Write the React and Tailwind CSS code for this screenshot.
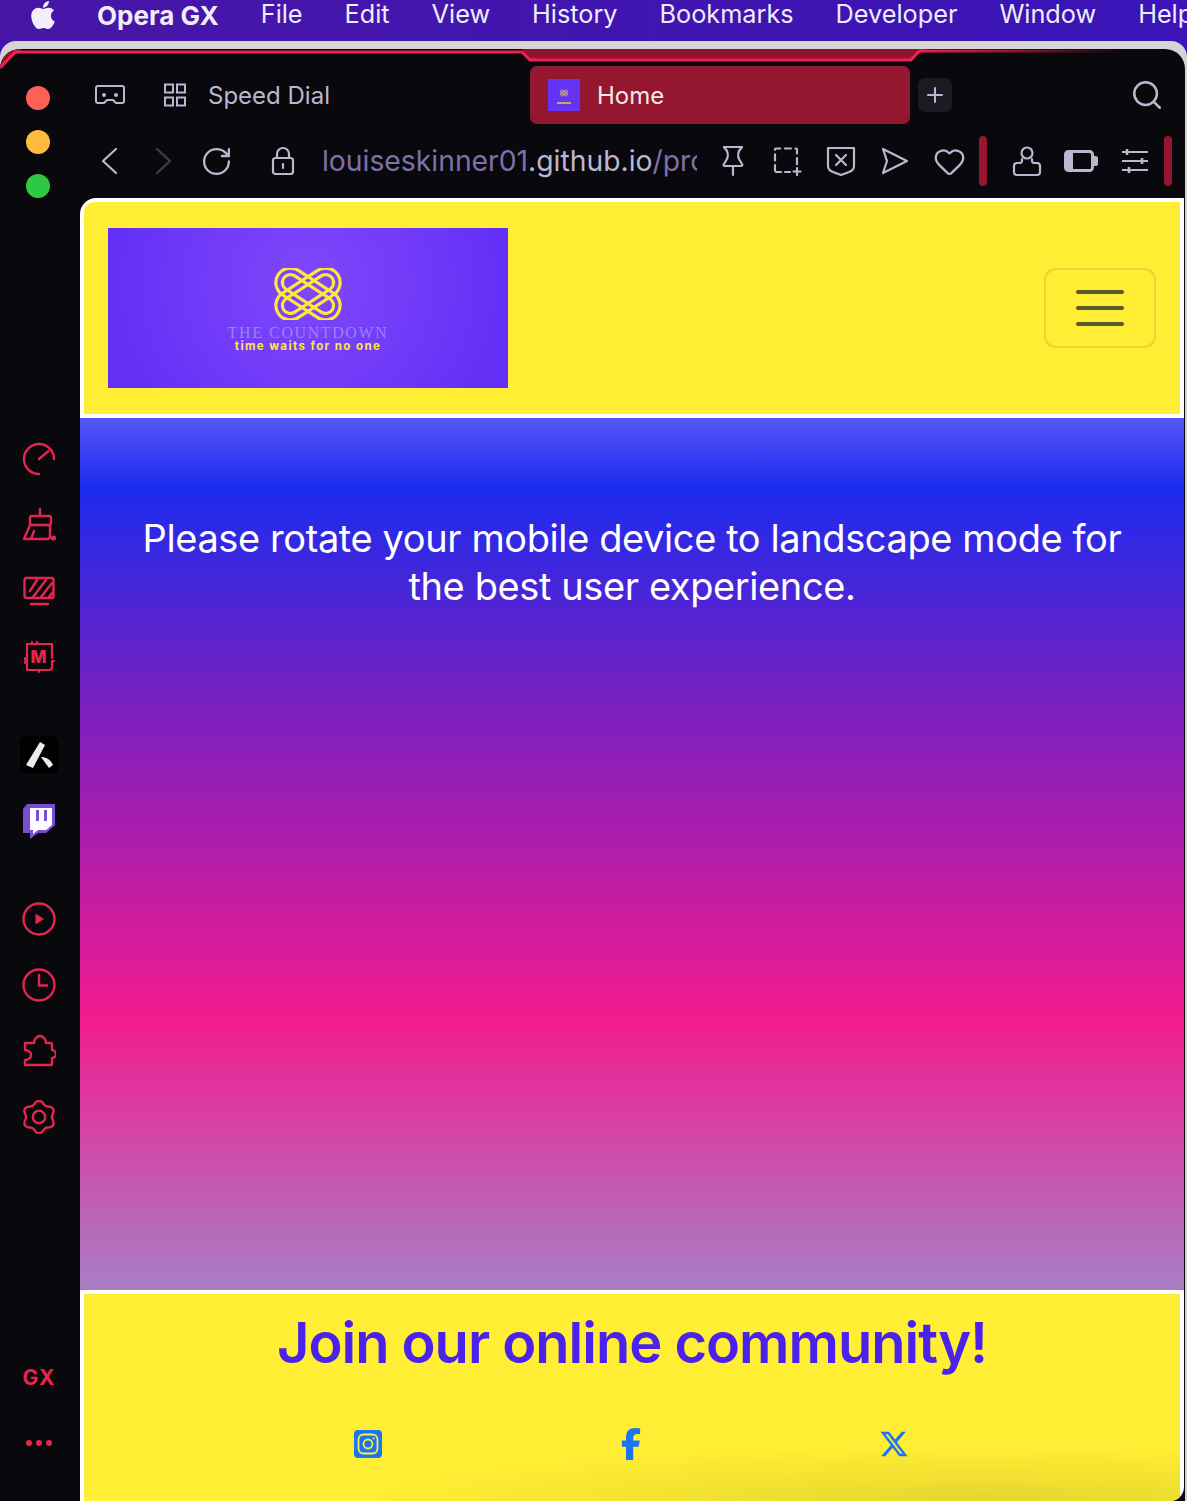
import React from 'react'
import { FaApple, FaFacebookF, FaXTwitter } from 'react-icons/fa6'
import { RotateCw, Heart, Search, Plus } from 'lucide-react'

const RED = '#e5254f'
const UI = '#bdb6d0'

function Stroke({ size = 34, view = 34, color = RED, width = 2.4, children }) {
  return (
    <svg width={size} height={size} viewBox={`0 0 ${view} ${view}`} fill="none" stroke={color} strokeWidth={width} strokeLinecap="round" strokeLinejoin="round">
      {children}
    </svg>
  )
}

// gear outline with six soft lobes
function gearPath() {
  let d = ''
  for (let i = 0; i <= 72; i++) {
    const a = (i / 72) * Math.PI * 2 - Math.PI / 2
    const r = 14.6 + 1.7 * Math.cos(6 * a + Math.PI)
    d += `${i ? 'L' : 'M'}${(17 + r * Math.cos(a)).toFixed(2)} ${(17 + r * Math.sin(a)).toFixed(2)}`
  }
  return d + 'Z'
}

function Knot({ className }) {
  const rects = [29, 16]
  return (
    <svg className={className} viewBox="0 0 68 52" fill="none" stroke="#ffe83a" strokeWidth="3.2">
      {[33, -33].map((rot) =>
        rects.map((h) => (
          <rect key={`${rot}-${h}`} x={34 - (h + 42) / 2} y={26 - h / 2} width={h + 42} height={h} rx={h / 2} transform={`rotate(${rot} 34 26)`} />
        ))
      )}
    </svg>
  )
}

function Sidebar() {
  return (
    <div className="w-[80px] shrink-0 flex flex-col items-center pt-[37px] pr-[2px]">
      <div className="flex flex-col gap-[20px] -ml-[2px]">
        <div className="w-[24px] h-[24px] rounded-full bg-[#fe5f57]" />
        <div className="w-[24px] h-[24px] rounded-full bg-[#febb3e]" />
        <div className="w-[24px] h-[24px] rounded-full bg-[#2fc842]" />
      </div>

      <div className="mt-[241px] flex flex-col gap-[26px]">
        <div className="w-[40px] h-[40px] flex items-center justify-center">
          <Stroke>
            <path d="M32 17A15 15 0 1 0 17 32" />
            <path d="M17 17L26.5 9" />
          </Stroke>
        </div>
        <div className="w-[40px] h-[40px] flex items-center justify-center">
          <Stroke>
            <path d="M18 1v7" />
            <rect x="8" y="8" width="21" height="9" rx="2" />
            <path d="M8 17L2 31h23c2 0 3-1 3-3V17" />
            <path d="M12 23l-3 8" />
            <circle cx="31.5" cy="30" r="2.6" fill={RED} stroke="none" />
          </Stroke>
        </div>
        <div className="w-[40px] h-[40px] flex items-center justify-center pt-[2px]">
          <Stroke>
            <rect x="2.5" y="3" width="29" height="20" rx="2" />
            <path d="M8 16L15 5M11 22L24 5M19 22L30 8M27 22l3-4" />
            <path d="M9 29h17" />
          </Stroke>
        </div>
        <div className="w-[40px] h-[40px] flex items-center justify-center">
          <svg width="34" height="34" viewBox="0 0 34 34" fill="none" stroke={RED} strokeWidth="2.2" strokeLinecap="round" strokeLinejoin="round">
            <path d="M30 22V27c0 2-1 3-3 3H5V4h25v14" />
            <path d="M10 2v2M15 2v2M3 18v2M3 22v1M17 30v2M32 21h-2" />
            <text x="16.5" y="23" textAnchor="middle" fill={RED} stroke="none" fontFamily="Inter, sans-serif" fontWeight="800" fontSize="17">M</text>
          </svg>
        </div>
      </div>

      <div className="mt-[58px] flex flex-col gap-[26px]">
        <div className="w-[40px] h-[40px] flex items-center justify-center">
          <svg width="38" height="38" viewBox="0 0 38 38">
            <rect width="38" height="38" rx="6" fill="#000" />
            <path d="M20 6l5 3L13 32l-7-3z" fill="#ececec" />
            <path d="M21 21c5 0 10 3 12 8l-4 3-8-11z" fill="#ececec" />
          </svg>
        </div>
        <div className="w-[40px] h-[40px] flex items-center justify-center">
          <svg width="32" height="35" viewBox="0 0 32 35">
            <path d="M4 0h28v21l-9 8h-8l-8 6v-6H0V5z" fill="#7b4dd6" />
            <path d="M7 4h22v17l-6 5H15l-5 4v-4H7z" fill="#fff" />
            <path d="M13 6h3v11h-3zM21 6h3v11h-3z" fill="#7b4dd6" />
          </svg>
        </div>
      </div>

      <div className="mt-[58px] flex flex-col gap-[26px]">
        <div className="w-[40px] h-[40px] flex items-center justify-center">
          <Stroke>
            <circle cx="17" cy="17" r="15.5" />
            <path d="M13.5 11.5v11l8.5-5.5z" fill={RED} stroke="none" />
          </Stroke>
        </div>
        <div className="w-[40px] h-[40px] flex items-center justify-center">
          <Stroke>
            <circle cx="17" cy="17" r="15.5" />
            <path d="M17 7v10.5h8" />
          </Stroke>
        </div>
        <div className="w-[40px] h-[40px] flex items-center justify-center">
          <Stroke>
            <path d="M3 31v-5c3 0 6-2 6-5s-3-5-6-5v-7h9c0-4 3-7 6-7s6 3 6 7h5c1 0 1 1 1 1v6c2 0 4 2 4 4s-2 4-4 4v6c0 1-1 1-1 1z" />
          </Stroke>
        </div>
        <div className="w-[40px] h-[40px] flex items-center justify-center">
          <Stroke>
            <path d={gearPath()} />
            <circle cx="17" cy="17" r="6.2" />
          </Stroke>
        </div>
      </div>

      <div className="mt-[221px] h-[40px] flex items-center font-['Inter',sans-serif] text-[21px] font-bold tracking-[1px] text-[#e5254f]">GX</div>
      <div className="mt-[25px] h-[40px] flex items-center gap-[4px]">
        <div className="w-[6px] h-[6px] rounded-full bg-[#e5254f]" />
        <div className="w-[6px] h-[6px] rounded-full bg-[#e5254f]" />
        <div className="w-[6px] h-[6px] rounded-full bg-[#e5254f]" />
      </div>
    </div>
  )
}

function TabRow() {
  return (
    <div className="h-[75px] pt-[17px] flex items-center shrink-0">
      <div className="ml-[14px] w-[32px] flex justify-center">
        <Stroke size={32} view={32} color={UI} width={2}>
          <path d="M4 7h24c1.500 0 2 1 2 2v13c0 1-.5 2-2 2h-6l-3-3h-6l-3 3H4c-1.500 0-2-1-2-2V9c0-1 .5-2 2-2z" />
          <circle cx="10" cy="16" r="1" fill={UI} />
          <circle cx="22" cy="16" r="1" fill={UI} />
        </Stroke>
      </div>
      <div className="ml-[37px] w-[24px]">
        <svg width="24" height="24" viewBox="0 0 24 24" fill="none" stroke={UI} strokeWidth="2">
          <rect x="2" y="1.500" width="8" height="8" />
          <rect x="14" y="1.500" width="8" height="8" />
          <rect x="2" y="14.500" width="8" height="8" />
          <rect x="14" y="14.500" width="8" height="8" />
        </svg>
      </div>
      <span className="ml-[21px] w-[122px] mt-[2px] whitespace-nowrap text-[24px] text-[#bdb6d0]">Speed Dial</span>
      <div className="ml-[200px] w-[380px] h-[58px] rounded-[7px] bg-[#95162f] flex items-center pl-[18px]">
        <div className="w-[32px] h-[32px] bg-[#6533f6] flex flex-col items-center justify-center">
          <Knot className="w-[8px] h-[14px]" />
          <div className="w-[14px] h-[2px] mt-[2px] bg-[#c9a94a]" />
        </div>
        <span className="ml-[17px] mt-[2px] text-[24px] text-[#f3e8ea]">Home</span>
      </div>
      <div className="ml-[8px] w-[34px] h-[34px] rounded-[7px] bg-[#1b1b26] flex items-center justify-center">
        <Plus size={24} color={UI} strokeWidth={2} />
      </div>
      <div className="ml-auto mr-[21px]">
        <Search size={34} color={UI} strokeWidth={1.8} />
      </div>
    </div>
  )
}

function AddressRow() {
  return (
    <div className="h-[74px] flex items-center shrink-0">
      <div className="ml-[3px] w-[54px] flex justify-center">
        <Stroke size={30} view={30} color={UI} width={2.2}>
          <path d="M21 3L8 15l13 12" />
        </Stroke>
      </div>
      <div className="w-[54px] -ml-[1px] flex justify-center">
        <Stroke size={30} view={30} color="#3f3f48" width={2.2}>
          <path d="M9 3l13 12L9 27" />
        </Stroke>
      </div>
      <div className="w-[54px] -ml-[1px] flex justify-center">
        <RotateCw size={33} color={UI} strokeWidth={1.7} />
      </div>
      <div className="ml-[13px] w-[54px] flex justify-center">
        <Stroke size={30} view={30} color={UI} width={2.2}>
          <rect x="5" y="12" width="20" height="16" rx="2.500" />
          <path d="M9 12V8a6 6 0 0 1 12 0v4" />
          <path d="M15 18v4" />
        </Stroke>
      </div>
      <div className="ml-[12px] w-[375px] overflow-hidden whitespace-nowrap text-[28.3px] leading-[40px] text-[#7f70a8]">
        louiseskinner01<span className="text-[#bdb6d0]">.github.io</span>/pro
      </div>
      <div className="ml-[9px] w-[54px] flex justify-center">
        <Stroke size={32} view={32} color={UI} width={2.2}>
          <path d="M7 2h18l-3 4c-1 2-1 6 0 8l3 5c1 1 0 2-1 2H8c-1 0-2-1-1-2l3-5c1-2 1-6 0-8z" />
          <path d="M16 21v9" />
        </Stroke>
      </div>
      <div className="w-[54px] flex justify-center">
        <svg width="30" height="30" viewBox="0 0 30 30" fill="none" stroke={UI} strokeWidth="2.2" strokeLinecap="round">
          <path d="M3 25V3.500c0-.5.3-1 1-1h20c.7 0 1 .5 1 1V19" strokeDasharray="6 4.600" />
          <path d="M4 26h16" strokeDasharray="5 4" />
          <path d="M25 22v7M21.500 25.500h7" />
        </svg>
      </div>
      <div className="w-[54px] flex justify-center">
        <Stroke size={32} view={32} color={UI} width={2.2}>
          <path d="M3 3h26v18c0 3-2 5-5 6l-8 3-8-3c-3-1-5-3-5-6z" />
          <path d="M11 10l10 10M21 10L11 20" />
        </Stroke>
      </div>
      <div className="w-[54px] flex justify-center">
        <Stroke size={30} view={30} color={UI} width={2.2}>
          <path d="M3 3l24 12-24 12 4-12z" />
        </Stroke>
      </div>
      <div className="w-[54px] flex justify-center">
        <Heart size={33} color={UI} strokeWidth={1.7} />
      </div>
      <div className="ml-[3px] w-[8px] h-[50px] rounded-full bg-[#95162f]" />
      <div className="ml-[13px] w-[54px] flex justify-center">
        <Stroke size={32} view={32} color={UI} width={2.2}>
          <circle cx="16" cy="8" r="5.500" />
          <path d="M11 14v2c0 1-1 2-3 2H6c-2 0-3 1-3 3v6c0 2 1 3 3 3h20c2 0 3-1 3-3v-6c0-2-1-3-3-3h-2c-2 0-3-1-3-2v-2" />
        </Stroke>
      </div>
      <div className="w-[54px] flex justify-center">
        <svg width="34" height="22" viewBox="0 0 34 22" fill="none">
          <rect x="1.500" y="1.500" width="27" height="19" rx="3" stroke={UI} strokeWidth="3" />
          <rect x="2" y="2" width="7" height="18" fill={UI} />
          <path d="M30 6h2c1 0 2 1 2 2v6c0 1-1 2-2 2h-2z" fill={UI} />
        </svg>
      </div>
      <div className="w-[54px] flex justify-center">
        <svg width="28" height="28" viewBox="0 0 28 28" fill="none" stroke={UI} strokeWidth="2.2">
          <path d="M1 5h26M1 14h26M1 23h26" />
          <path d="M6 2v6M21 11v6M8 20v6" strokeWidth="2.600" />
        </svg>
      </div>
      <div className="ml-[2px] w-[8px] h-[50px] rounded-full bg-[#95162f]" />
    </div>
  )
}

function Page() {
  return (
    <div className="w-[1104px] flex-1 min-h-0 flex flex-col bg-white rounded-tl-[16px] rounded-br-[14px] overflow-hidden pt-[4px]">
      <header className="mx-[4px] h-[212px] bg-[#ffee33] rounded-tl-[10px] flex items-center justify-between pl-[24px] pr-[24px] shrink-0">
        <div className="w-[400px] h-[160px] bg-[radial-gradient(circle_at_50%_35%,#7f48fb,#6530f6_85%)] flex flex-col items-center pt-[40px]">
          <Knot className="w-[68px] h-[52px]" />
          <div className="mt-[5px] font-['Liberation_Serif',serif] text-[16px] leading-[16px] tracking-[1.600px] whitespace-nowrap text-[#9a80f8]">THE COUNTDOWN</div>
          <div className="font-['Inter',sans-serif] text-[11.500px] leading-[11px] font-bold tracking-[1.400px] whitespace-nowrap text-[#ffe83a]">time waits for no one</div>
        </div>
        <button className="w-[112px] h-[80px] rounded-[12px] border-2 border-[#e5d735] flex flex-col items-center justify-center gap-[12px]">
          <div className="w-[48px] h-[4px] rounded-full bg-[#5a5830]" />
          <div className="w-[48px] h-[4px] rounded-full bg-[#5a5830]" />
          <div className="w-[48px] h-[4px] rounded-full bg-[#5a5830]" />
        </button>
      </header>

      <main className="mt-[4px] h-[872px] shrink-0 bg-[linear-gradient(180deg,#5656f6_0%,#1c2bef_8%,#7a1fc0_33%,#f31b8e_69%,#a77fc6_100%)] pt-[96px]">
        <p className="font-['Inter',sans-serif] text-[38px] leading-[48px] tracking-[-0.4px] text-center text-white whitespace-nowrap">
          Please rotate your mobile device to landscape mode for
          <br />
          the best user experience.
        </p>
      </main>

      <footer className="mt-[4px] mx-[4px] flex-1 bg-[#ffee33] bg-[radial-gradient(ellipse_620px_55px_at_900px_100%,#e6d62e,#ffee3300)] pt-[19px]">
        <h2 className="font-['Inter',sans-serif] text-[56px] leading-[60px] font-semibold tracking-[-1px] text-center text-[#4a22ec] whitespace-nowrap">
          Join our online community!
        </h2>
        <div className="mt-[51px] flex justify-center">
          <div className="w-[263px] h-[40px] flex items-center justify-center -ml-[2px]">
            <svg width="28" height="28" viewBox="0 0 28 28" fill="none" stroke="#ffee33" strokeWidth="1.800">
              <rect width="28" height="28" rx="4" fill="#1c74f4" stroke="none" />
              <rect x="4.500" y="4.500" width="19" height="19" rx="5" />
              <circle cx="14" cy="14" r="4.500" />
              <circle cx="19.500" cy="8.500" r="1" fill="#ffee33" stroke="none" />
            </svg>
          </div>
          <div className="w-[263px] h-[40px] flex items-center justify-center">
            <FaFacebookF size={32} color="#1c74f4" />
          </div>
          <div className="w-[263px] h-[40px] flex items-center justify-center">
            <FaXTwitter size={30} color="#1c74f4" />
          </div>
        </div>
      </footer>
    </div>
  )
}

export default function App() {
  return (
    <div className="w-[1187px] h-[1501px] overflow-hidden flex flex-col bg-[#3f14b0] font-['Inter',sans-serif]">
      <div className="h-[41px] shrink-0 flex items-center bg-[linear-gradient(90deg,#4716a6,#3a14b8)] text-[25.250px] text-[#f0ecfa] whitespace-nowrap overflow-hidden">
        <FaApple size={32} className="ml-[27px] -mt-[12px] shrink-0" color="#f2effa" />
        <div className="ml-[38px] -mt-[10px] flex gap-[42px]">
          <span className="font-bold text-[26px]">Opera GX</span>
          <span>File</span>
          <span>Edit</span>
          <span>View</span>
          <span>History</span>
          <span>Bookmarks</span>
          <span>Developer</span>
          <span>Window</span>
          <span>Help</span>
        </div>
      </div>

      <div className="flex-1 min-h-0 flex flex-col pt-[8px] rounded-t-[16px] bg-[#d4d4d4]">
        <div className="relative flex-1 min-h-0 mr-[2px] flex rounded-t-[20px] overflow-hidden bg-[#08080d]">
          <svg className="absolute left-0 top-0" width="1185" height="22" viewBox="0 0 1185 22" fill="none">
            <defs>
              <linearGradient id="tail" gradientUnits="userSpaceOnUse" x1="919" y1="0" x2="1130" y2="0">
                <stop offset="0" stopColor="#f2204f" />
                <stop offset="1" stopColor="#f2204f" stopOpacity="0" />
              </linearGradient>
            </defs>
            <path d="M0 0H22L0 19zM522 0H926L911 11H530z" fill="#8e1530" />
            <path d="M0 19L15 3H522L530 11H911L919 2" stroke="#f2204f" strokeWidth="3" />
            <path d="M919 2H1130" stroke="url(#tail)" strokeWidth="3" />
          </svg>
          <Sidebar />
          <div className="flex-1 min-w-0 flex flex-col">
            <TabRow />
            <AddressRow />
            <Page />
          </div>
        </div>
      </div>
    </div>
  )
}
